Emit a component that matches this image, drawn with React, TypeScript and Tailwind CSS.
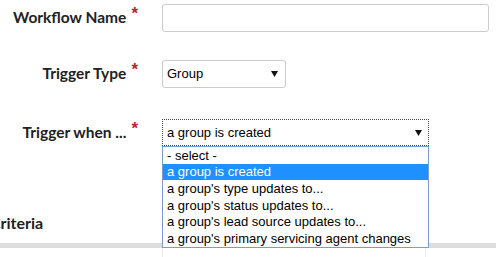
import React from 'react';

// 必須マーク付きラベル
function Label({ text }: { text: string }) {
  return (
    <div className="flex w-[138px] shrink-0 items-start justify-end text-[15.5px] font-bold leading-none text-[#222]">
      <span>{text}</span>
      <span className="ml-[5px] -mt-[5px] font-['Liberation_Sans',Arial,sans-serif] text-[17px] text-[#b5272d]">*</span>
    </div>
  );
}

// 選択肢の下向き三角
function Caret() {
  return (
    <svg width="7" height="6" viewBox="0 0 7 6" className="shrink-0">
      <path d="M0 0 H7 L3.5 6 Z" fill="#111" />
    </svg>
  );
}

const OPTIONS = [
  '- select -',
  'a group is created',
  "a group's type updates to...",
  "a group's status updates to...",
  "a group's lead source updates to...",
  "a group's primary servicing agent changes",
];

export default function App() {
  return (
    <div className="relative h-[257px] w-[496px] overflow-hidden bg-white font-['Lato',sans-serif]">
      {/* Workflow Name */}
      <div className="flex items-center pt-[4px]">
        <Label text="Workflow Name" />
        <div className="ml-[24px] h-[28px] w-[327px] rounded-[3px] border border-[#ccc] bg-white" />
      </div>

      {/* Trigger Type */}
      <div className="mt-[28px] flex items-center">
        <Label text="Trigger Type" />
        <div className="ml-[24px] flex h-[28px] w-[124px] items-center justify-between rounded-[3px] border border-[#ccc] bg-white pl-[4px] pr-[7px] font-['Liberation_Sans',Arial,sans-serif] text-[13px] text-black">
          <span>Group</span>
          <Caret />
        </div>
      </div>

      {/* Trigger when ... (開いた状態のドロップダウン) */}
      <div className="mt-[31px] flex items-center">
        <Label text="Trigger when ..." />
        <div className="relative ml-[24px] w-[267px]">
          <div className="flex h-[27px] items-center justify-between border border-dotted border-[#444] bg-white pl-[4px] pr-[6px] font-['Liberation_Sans',Arial,sans-serif] text-[13px] text-black">
            <span>a group is created</span>
            <Caret />
          </div>
          <ul className="absolute left-0 top-full z-10 w-full border border-[#7a9cd3] bg-white font-['Liberation_Sans',Arial,sans-serif] text-[13px] text-black">
            {OPTIONS.map((o, i) => (
              <li
                key={o}
                className={`flex h-[16.7px] items-center pl-[4px] ${i === 1 ? 'bg-[#1e90ff] text-white' : ''}`}
              >
                {o}
              </li>
            ))}
          </ul>
        </div>
      </div>

      {/* Criteria 見出し (左端で切れている) */}
      <h2 className="-ml-[10px] mt-[69px] text-[16px] font-bold leading-none text-[#222]">Criteria</h2>
      <div className="mt-[12px] h-[5px] w-full bg-[#ddd]" />
      <div className="ml-[162px] h-[20px] w-[264px] border-x border-[#e8e8e8]" />
    </div>
  );
}
